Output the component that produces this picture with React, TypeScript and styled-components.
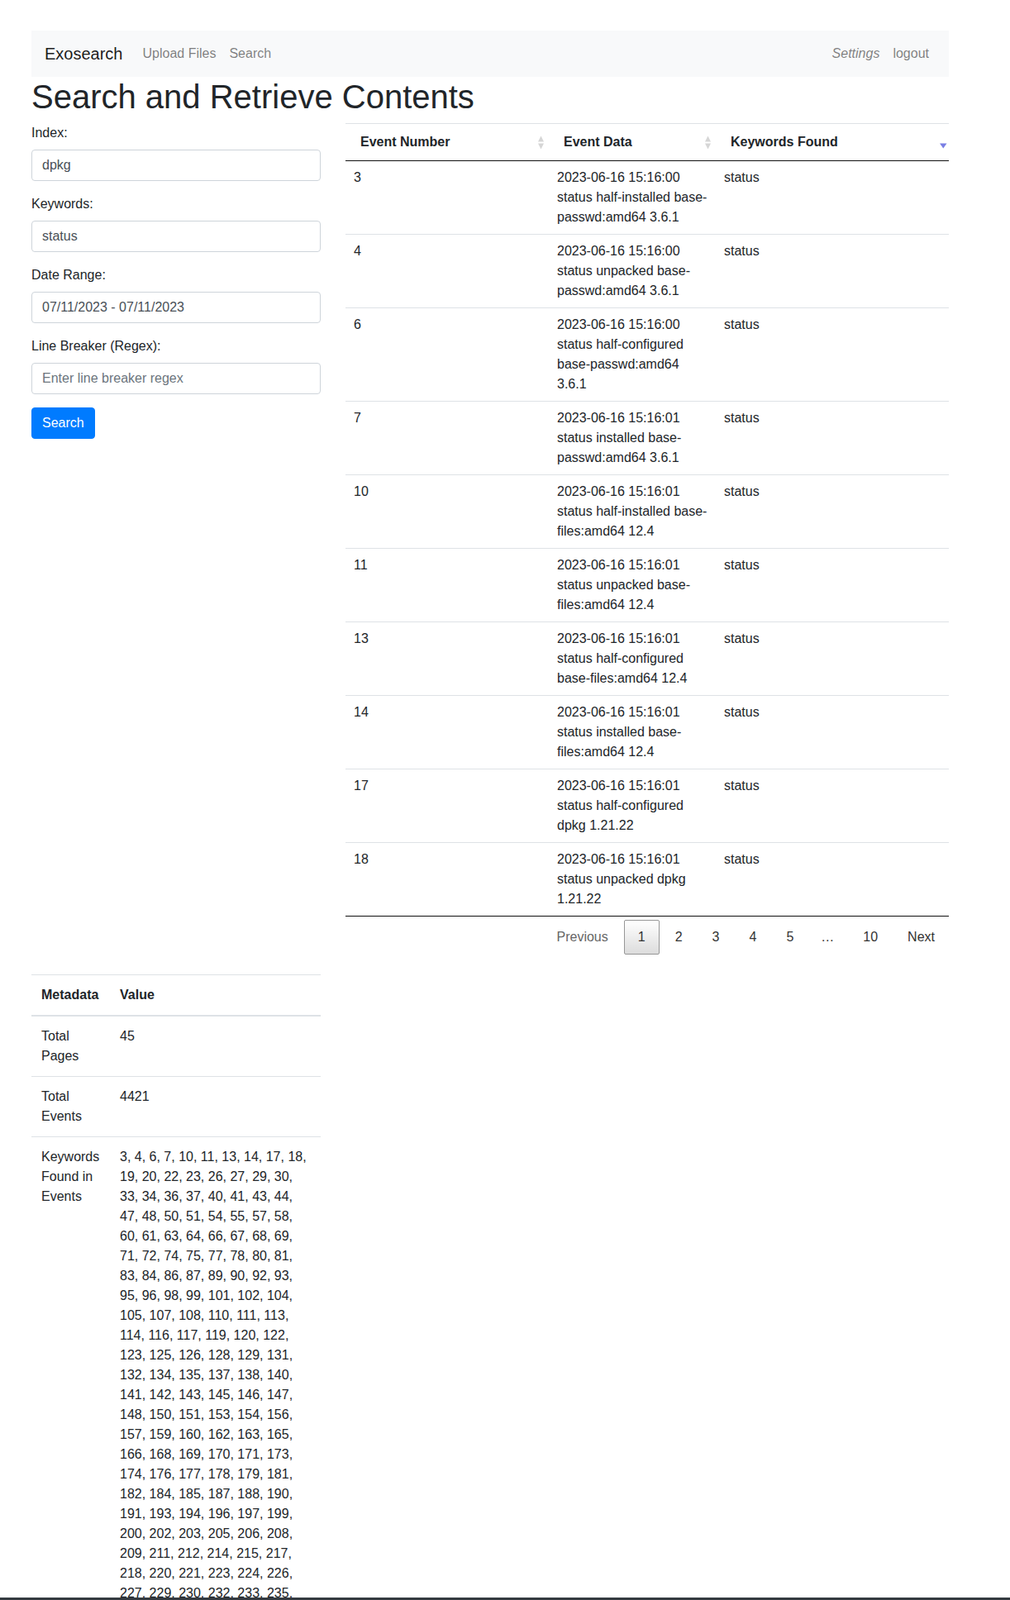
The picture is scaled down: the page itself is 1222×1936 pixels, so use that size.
import React from 'react';
import styled, { createGlobalStyle } from 'styled-components';

const GlobalStyle = createGlobalStyle`
  html, body { margin: 0; padding: 0; background: #fff; }
  body {
    font-family: "Liberation Sans", Arial, Helvetica, sans-serif;
    font-size: 16px;
    line-height: 1.5;
    color: #212529;
  }
  *, *::before, *::after { box-sizing: border-box; }
`;

const Page = styled.div`
  padding-top: 37px;
  padding-bottom: 40px;
`;

const Container = styled.div`
  width: 1110px;
  margin-left: 38px;
`;

const Navbar = styled.nav`
  display: flex;
  align-items: center;
  height: 56px;
  padding: 8px 16px;
  background: #f8f9fa;
`;

const Brand = styled.a`
  font-size: 20px;
  line-height: 30px;
  padding: 5px 0;
  margin-right: 16px;
  color: rgba(0, 0, 0, 0.9);
  text-decoration: none;
`;

const NavList = styled.div<{ $right?: boolean }>`
  display: flex;
  margin-left: ${(p) => (p.$right ? 'auto' : '0')};
`;

const NavLink = styled.a<{ $italic?: boolean }>`
  padding: 8px;
  color: rgba(0, 0, 0, 0.5);
  font-style: ${(p) => (p.$italic ? 'italic' : 'normal')};
  text-decoration: none;
`;

const Title = styled.h1`
  font-size: 40px;
  font-weight: 500;
  line-height: 1.2;
  margin: 0 0 8px;
`;

const Row = styled.div<{ $spaced?: boolean }>`
  display: grid;
  grid-template-columns: 350px 730px;
  column-gap: 30px;
  align-items: start;
  margin-top: ${(p) => (p.$spaced ? '24px' : '0')};
`;

const Form = styled.form`
  display: flex;
  flex-direction: column;
`;

const FormGroup = styled.div`
  margin-bottom: 16px;
`;

const Label = styled.label`
  display: block;
  margin-bottom: 8px;
`;

const Input = styled.input`
  display: block;
  width: 100%;
  height: 38px;
  padding: 6px 12px;
  font-family: inherit;
  font-size: 16px;
  line-height: 1.5;
  color: #495057;
  background: #fff;
  border: 1px solid #ced4da;
  border-radius: 4px;
  outline: none;
  &::placeholder { color: #6c757d; opacity: 1; }
`;

const PrimaryButton = styled.button`
  align-self: flex-start;
  padding: 6px 12px;
  font-family: inherit;
  font-size: 16px;
  line-height: 1.5;
  color: #fff;
  background: #007bff;
  border: 1px solid #007bff;
  border-radius: 4px;
`;

const ResultsTable = styled.table`
  width: 100%;
  border-collapse: collapse;
  table-layout: fixed;
  border-bottom: 1px solid #111;
`;

const Col = styled.col<{ $w?: number }>`
  width: ${(p) => (p.$w ? `${p.$w}px` : 'auto')};
`;

const HeadCell = styled.th`
  padding: 10px 0 10px 18px;
  text-align: left;
  font-weight: bold;
  border-top: 1px solid #dee2e6;
  border-bottom: 1px solid #111;
  vertical-align: middle;
`;

const HeadInner = styled.div`
  display: flex;
  align-items: center;
  justify-content: space-between;
`;

const BodyCell = styled.td`
  padding: 8px 10px;
  vertical-align: top;
  border-top: 1px solid #dee2e6;
  tr:first-child > & { border-top: none; }
`;

const Pager = styled.div`
  display: flex;
  justify-content: flex-end;
  align-items: center;
  padding-top: 4px;
`;

const PageButton = styled.a<{ $current?: boolean; $disabled?: boolean }>`
  display: inline-block;
  min-width: 24px;
  margin-left: 2px;
  padding: 8px 16px;
  text-align: center;
  border: 1px solid ${(p) => (p.$current ? '#979797' : 'transparent')};
  border-radius: 2px;
  color: ${(p) => (p.$disabled ? '#666' : '#333')};
  background: ${(p) =>
    p.$current ? 'linear-gradient(to bottom, #fff 0%, #dcdcdc 100%)' : 'transparent'};
`;

const Ellipsis = styled.span`
  padding: 0 16px;
  color: #333;
`;

const MetaTable = styled.table`
  width: 100%;
  border-collapse: collapse;
`;

const MetaHead = styled.th`
  padding: 12px;
  text-align: left;
  font-weight: bold;
  vertical-align: bottom;
  border-top: 1px solid #dee2e6;
  border-bottom: 2px solid #dee2e6;
`;

const MetaCell = styled.td`
  padding: 12px;
  vertical-align: top;
  border-top: 1px solid #dee2e6;
`;

const FooterBar = styled.div`
  position: fixed;
  left: 0;
  right: 0;
  bottom: 0;
  height: 3px;
  background: #343a40;
`;

const SortBoth = () => (
  <svg width="19" height="19" viewBox="0 0 19 19" aria-hidden="true">
    <polygon points="9.5,1.5 13,8.5 6,8.5" fill="#d6d6d6" />
    <polygon points="6,10.5 13,10.5 9.5,17.5" fill="#d6d6d6" />
  </svg>
);

const SortDesc = () => (
  <svg width="19" height="19" viewBox="0 0 19 19" aria-hidden="true">
    <polygon points="8,10.5 16.5,10.5 12.25,16.5" fill="#7a7fe4" />
  </svg>
);

const rows: [string, string][] = [
  ['3', '2023-06-16 15:16:00 status half-installed base-passwd:amd64 3.6.1'],
  ['4', '2023-06-16 15:16:00 status unpacked base-passwd:amd64 3.6.1'],
  ['6', '2023-06-16 15:16:00 status half-configured base-passwd:amd64 3.6.1'],
  ['7', '2023-06-16 15:16:01 status installed base-passwd:amd64 3.6.1'],
  ['10', '2023-06-16 15:16:01 status half-installed base-files:amd64 12.4'],
  ['11', '2023-06-16 15:16:01 status unpacked base-files:amd64 12.4'],
  ['13', '2023-06-16 15:16:01 status half-configured base-files:amd64 12.4'],
  ['14', '2023-06-16 15:16:01 status installed base-files:amd64 12.4'],
  ['17', '2023-06-16 15:16:01 status half-configured dpkg 1.21.22'],
  ['18', '2023-06-16 15:16:01 status unpacked dpkg 1.21.22'],
];

const keywordEvents =
  '3, 4, 6, 7, 10, 11, 13, 14, 17, 18, 19, 20, 22, 23, 26, 27, 29, 30, 33, 34, 36, 37, 40, 41, 43, 44, ' +
  '47, 48, 50, 51, 54, 55, 57, 58, 60, 61, 63, 64, 66, 67, 68, 69, 71, 72, 74, 75, 77, 78, 80, 81, ' +
  '83, 84, 86, 87, 89, 90, 92, 93, 95, 96, 98, 99, 101, 102, 104, 105, 107, 108, 110, 111, 113, ' +
  '114, 116, 117, 119, 120, 122, 123, 125, 126, 128, 129, 131, 132, 134, 135, 137, 138, 140, ' +
  '141, 142, 143, 145, 146, 147, 148, 150, 151, 153, 154, 156, 157, 159, 160, 162, 163, 165, ' +
  '166, 168, 169, 170, 171, 173, 174, 176, 177, 178, 179, 181, 182, 184, 185, 187, 188, 190, ' +
  '191, 193, 194, 196, 197, 199, 200, 202, 203, 205, 206, 208, 209, 211, 212, 214, 215, 217, ' +
  '218, 220, 221, 223, 224, 226, 227, 229, 230, 232, 233, 235, 236, 238, 239, 241, 242, 244, ' +
  '245, 247, 248, 250, 251, 253, 254, 256, 257, 259, 260, 262, 263, 265, 266, 268, 269, 271';

export default function App() {
  return (
    <>
      <GlobalStyle />
      <Page>
        <Container>
          <Navbar>
            <Brand href="#">Exosearch</Brand>
            <NavList>
              <NavLink href="#">Upload Files</NavLink>
              <NavLink href="#">Search</NavLink>
            </NavList>
            <NavList $right>
              <NavLink href="#" $italic>Settings</NavLink>
              <NavLink href="#">logout</NavLink>
            </NavList>
          </Navbar>

          <Title>Search and Retrieve Contents</Title>

          <Row>
            <Form onSubmit={(e) => e.preventDefault()}>
              <FormGroup>
                <Label>Index:</Label>
                <Input type="text" defaultValue="dpkg" />
              </FormGroup>
              <FormGroup>
                <Label>Keywords:</Label>
                <Input type="text" defaultValue="status" />
              </FormGroup>
              <FormGroup>
                <Label>Date Range:</Label>
                <Input type="text" defaultValue="07/11/2023 - 07/11/2023" />
              </FormGroup>
              <FormGroup>
                <Label>Line Breaker (Regex):</Label>
                <Input type="text" placeholder="Enter line breaker regex" />
              </FormGroup>
              <PrimaryButton type="submit">Search</PrimaryButton>
            </Form>

            <div>
              <ResultsTable>
                <colgroup>
                  <Col $w={246} />
                  <Col $w={202} />
                  <Col $w={282} />
                </colgroup>
                <thead>
                  <tr>
                    <HeadCell>
                      <HeadInner>
                        <span>Event Number</span>
                        <SortBoth />
                      </HeadInner>
                    </HeadCell>
                    <HeadCell>
                      <HeadInner>
                        <span>Event Data</span>
                        <SortBoth />
                      </HeadInner>
                    </HeadCell>
                    <HeadCell>
                      <HeadInner>
                        <span>Keywords Found</span>
                        <SortDesc />
                      </HeadInner>
                    </HeadCell>
                  </tr>
                </thead>
                <tbody>
                  {rows.map(([num, data]) => (
                    <tr key={num}>
                      <BodyCell>{num}</BodyCell>
                      <BodyCell>{data}</BodyCell>
                      <BodyCell>status</BodyCell>
                    </tr>
                  ))}
                </tbody>
              </ResultsTable>
              <Pager>
                <PageButton $disabled>Previous</PageButton>
                <PageButton $current>1</PageButton>
                <PageButton>2</PageButton>
                <PageButton>3</PageButton>
                <PageButton>4</PageButton>
                <PageButton>5</PageButton>
                <Ellipsis>…</Ellipsis>
                <PageButton>10</PageButton>
                <PageButton>Next</PageButton>
              </Pager>
            </div>
          </Row>

          <Row $spaced>
            <MetaTable>
              <colgroup>
                <Col $w={95} />
                <Col />
              </colgroup>
              <thead>
                <tr>
                  <MetaHead>Metadata</MetaHead>
                  <MetaHead>Value</MetaHead>
                </tr>
              </thead>
              <tbody>
                <tr>
                  <MetaCell>Total Pages</MetaCell>
                  <MetaCell>45</MetaCell>
                </tr>
                <tr>
                  <MetaCell>Total Events</MetaCell>
                  <MetaCell>4421</MetaCell>
                </tr>
                <tr>
                  <MetaCell>Keywords Found in Events</MetaCell>
                  <MetaCell>{keywordEvents}</MetaCell>
                </tr>
              </tbody>
            </MetaTable>
          </Row>
        </Container>
      </Page>
      <FooterBar />
    </>
  );
}
